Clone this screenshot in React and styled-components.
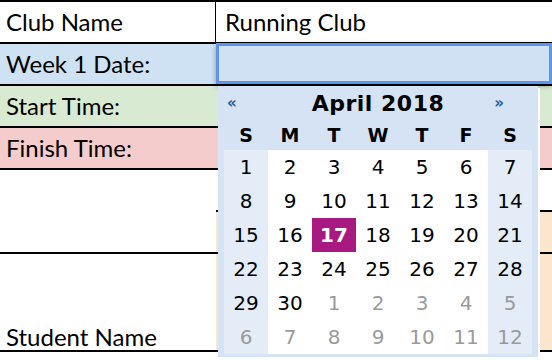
import React from "react";
import styled, {createGlobalStyle} from "styled-components";

const GlobalStyle = createGlobalStyle`
    html, body {
        margin: 0;
        padding: 0;
        background: #ffffff;
    }
    body {
        position: relative;
        width: 552px;
        height: 360px;
        overflow: hidden;
    }
`;

const Sheet = styled.div`
    position: relative;
    display: grid;
    grid-template-columns: 216px 1fr;
    grid-template-rows: 42px 42px 42px 42px 42px 42px 98px;
    border-top: 2px solid #000;
    font-family: Lato, "Open Sans", sans-serif;
    font-size: 24px;
    line-height: 1;
    color: #000;
`;

const Cell = styled.div`
    display: flex;
    align-items: flex-end;
    box-sizing: border-box;
    padding: 0 0 ${p => p.$pb ?? 8}px ${p => p.$pl ?? 6}px;
    background: ${p => p.$bg || "#ffffff"};
    border-bottom: ${p => (p.$line ? "2px solid #000" : "none")};
    border-right: ${p => (p.$divider ? "1px solid #000" : "none")};
    grid-row: ${p => p.$row || "auto"};
    white-space: nowrap;
`;

const Editor = styled.div`
    position: absolute;
    left: 216px;
    top: 41px;
    width: 336px;
    height: 41px;
    box-sizing: border-box;
    background: #cfe1f2;
    border: 3px solid #5b95f0;
    box-shadow: 0 2px 5px rgba(0, 0, 0, 0.35);
`;

const Picker = styled.div`
    position: absolute;
    left: 218px;
    top: 86px;
    width: 320px;
    height: 271px;
    box-sizing: border-box;
    padding: 0 6px 3px 6px;
    background: #d5e3f4;
    box-shadow: 2px 2px 0 #ffffff;
    font-family: "DejaVu Sans", Verdana, sans-serif;
`;

const Nav = styled.div`
    display: grid;
    grid-template-columns: 1fr auto 1fr;
    align-items: center;
    height: 34px;
`;

const Arrow = styled.span`
    justify-self: ${p => (p.$right ? "end" : "start")};
    margin: ${p => (p.$right ? "0 28px 0 0" : "0 0 0 3px")};
    color: #1f5f99;
    font-size: 15px;
    font-weight: bold;
    cursor: pointer;
`;

const Month = styled.span`
    font-size: 22px;
    font-weight: bold;
    letter-spacing: 0.5px;
`;

const Days = styled.div`
    display: grid;
    grid-template-columns: repeat(7, 44px);
`;

const DayName = styled.div`
    height: 30px;
    display: flex;
    align-items: center;
    justify-content: center;
    font-size: 19px;
    font-weight: bold;
`;

const DateCell = styled.div`
    height: 34px;
    display: flex;
    align-items: center;
    justify-content: center;
    font-size: 20px;
    background: ${p => (p.$selected ? "#a81a81" : p.$weekend ? "#e4ecf8" : "#ffffff")};
    color: ${p => (p.$selected ? "#ffffff" : p.$other ? "#9a9a9a" : "#000000")};
    font-weight: ${p => (p.$selected ? "bold" : "normal")};
`;

const dayNames = ["S", "M", "T", "W", "T", "F", "S"];

const buildDates = () => {
    const cells = [];
    for (let d = 1; d <= 30; d++) cells.push({day: d, other: false});
    for (let d = 1; d <= 12; d++) cells.push({day: d, other: true});
    return cells;
};

const Calendar = () => (
    <Picker>
        <Nav>
            <Arrow>«</Arrow>
            <Month>April 2018</Month>
            <Arrow $right>»</Arrow>
        </Nav>
        <Days>
            {dayNames.map((n, i) => <DayName key={i}>{n}</DayName>)}
            {buildDates().map((c, i) => (
                <DateCell
                    key={i}
                    $weekend={i % 7 === 0 || i % 7 === 6}
                    $other={c.other}
                    $selected={!c.other && c.day === 17}
                >
                    {c.day}
                </DateCell>
            ))}
        </Days>
    </Picker>
);

export default function App() {
    return (
        <>
            <GlobalStyle/>
            <Sheet>
                <Cell $line $divider>Club Name</Cell>
                <Cell $line $pl={9}>Running Club</Cell>
                <Cell $line $bg="#cfe2f3">Week 1 Date:</Cell>
                <Cell $line $bg="#cfe2f3"/>
                <Cell $line $bg="#d9ead3">Start Time:</Cell>
                <Cell $line $bg="#d9ead3"/>
                <Cell $line $bg="#f4cccc">Finish Time:</Cell>
                <Cell $line $bg="#f4cccc"/>
                <Cell $line $row="span 2"/>
                <Cell $line/>
                <Cell $line $bg="#fce5cd"/>
                <Cell $line $pb={1}>Student Name</Cell>
                <Cell $line $bg="#fce5cd"/>
                <Editor/>
            </Sheet>
            <Calendar/>
        </>
    );
}
